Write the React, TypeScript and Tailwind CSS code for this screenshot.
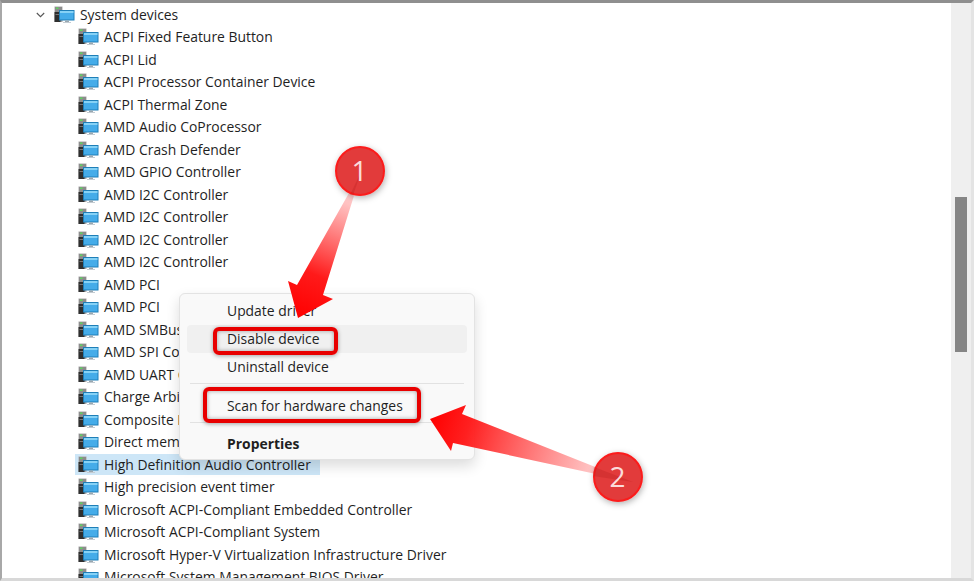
import React from "react";

const devices = [
  "ACPI Fixed Feature Button",
  "ACPI Lid",
  "ACPI Processor Container Device",
  "ACPI Thermal Zone",
  "AMD Audio CoProcessor",
  "AMD Crash Defender",
  "AMD GPIO Controller",
  "AMD I2C Controller",
  "AMD I2C Controller",
  "AMD I2C Controller",
  "AMD I2C Controller",
  "AMD PCI",
  "AMD PCI",
  "AMD SMBus",
  "AMD SPI Controller",
  "AMD UART Controller",
  "Charge Arbitration Driver",
  "Composite Bus Enumerator",
  "Direct memory access controller",
  "High Definition Audio Controller",
  "High precision event timer",
  "Microsoft ACPI-Compliant Embedded Controller",
  "Microsoft ACPI-Compliant System",
  "Microsoft Hyper-V Virtualization Infrastructure Driver",
  "Microsoft System Management BIOS Driver",
];

function DeviceIcon() {
  return (
    <svg width="21" height="18" viewBox="0 0 21 18" className="shrink-0">
      <rect x="0.5" y="0.5" width="8" height="15.5" fill="#a9a9a9" />
      <rect x="1" y="1" width="7" height="5" fill="#8c8c8c" />
      <rect x="2" y="1.5" width="2.5" height="1.5" fill="#5fd35f" />
      <rect x="0.5" y="6" width="6" height="10" fill="#2f2f2f" />
      <rect x="1.5" y="8" width="3.5" height="1" fill="#777" />
      <rect x="5" y="4" width="15.5" height="10.5" fill="#1f7fb8" />
      <rect x="6" y="5" width="13.5" height="8.5" fill="#45ace9" />
      <rect x="6" y="5" width="13.5" height="2" fill="#86d2f6" />
      <rect x="11" y="14.5" width="4" height="1.5" fill="#9aa7b0" />
      <rect x="9" y="16" width="8" height="1" fill="#c4ccd2" />
    </svg>
  );
}

function Row({ label }: { label: string }) {
  const selected = label === "High Definition Audio Controller";
  return (
    <div className="flex h-[22.5px] items-center pl-[73px]">
      <div className={`flex h-[21px] items-center pl-[3px] pr-[9px] ${selected ? "bg-[#cde6f7]" : ""}`}>
        <DeviceIcon />
        <span className="ml-[5px] whitespace-nowrap">{label}</span>
      </div>
    </div>
  );
}

function MenuItem({ label, className = "" }: { label: string; className?: string }) {
  return (
    <div className={`mx-[7px] flex h-[28px] items-center rounded-[4px] pl-[40px] ${className}`}>{label}</div>
  );
}

export default function App() {
  return (
    <div
      className="relative h-[581px] w-[974px] overflow-hidden border-t-[3px] border-b-[3px] border-l-[2px] border-r-[3px] border-t-[#8f8f8f] border-b-[#d8d8d8] border-l-[#a8a8a8] border-r-[#e4e4e4] bg-white text-[13.9px] leading-none text-[#1f1f1f]"
      style={{ fontFamily: '"Open Sans", "Noto Sans", sans-serif' }}
    >
      <div className="flex h-full">
        <div className="min-w-0 flex-1 overflow-hidden pt-[0.5px]">
          <div className="flex h-[22.5px] items-center pl-[34px]">
            <svg width="9" height="6" viewBox="0 0 9 6" className="shrink-0">
              <path d="M0.8 1 L4.5 4.7 L8.2 1" fill="none" stroke="#555" strokeWidth="1.1" />
            </svg>
            <span className="ml-[9px]"><DeviceIcon /></span>
            <span className="ml-[5px] whitespace-nowrap">System devices</span>
          </div>
          {devices.map((d, i) => (
            <Row key={i} label={d} />
          ))}
        </div>
        <div className="flex w-[20px] shrink-0 flex-col bg-[#efefef] pl-[4px] pr-[4px] pt-[194px]">
          <div className="h-[155px] w-[12px] bg-[#858585]" />
        </div>
      </div>

      {/* Context menu */}
      <div className="absolute left-[177px] top-[290px] flex h-[167px] w-[296px] flex-col rounded-[6px] border border-[#e3e3e3] bg-[#f9f9f9] pt-[3px] shadow-[0_6px_14px_rgba(0,0,0,0.14)]">
        <MenuItem label="Update driver" />
        <MenuItem label="Disable device" className="bg-[#f0f0f0]" />
        <MenuItem label="Uninstall device" />
        <div className="mx-[10px] mb-[8px] mt-[2px] h-px bg-[#e2e2e2]" />
        <MenuItem label="Scan for hardware changes" />
        <div className="mx-[10px] mt-[2px] h-px bg-[#e2e2e2]" />
        <MenuItem label="Properties" className="mt-[7px] font-bold" />
      </div>

      {/* Callout rectangles */}
      <div className="absolute left-[211px] top-[324px] h-[28px] w-[125px] rounded-[6px] border-[4px] border-[#e80000] shadow-[0_1px_4px_rgba(0,0,0,0.35),inset_0_0_4px_rgba(0,0,0,0.35)]" />
      <div className="absolute left-[201px] top-[384px] h-[36px] w-[218px] rounded-[6px] border-[4px] border-[#e80000] shadow-[0_1px_4px_rgba(0,0,0,0.35),inset_0_0_4px_rgba(0,0,0,0.35)]" />

      {/* Arrows */}
      <svg className="absolute left-[-2px] top-[-3px]" width="974" height="581" viewBox="0 0 974 581">
        <defs>
          <linearGradient id="a1" gradientUnits="userSpaceOnUse" x1="358" y1="175" x2="298" y2="318">
            <stop offset="0" stopColor="#ff0000" stopOpacity="0.05" />
            <stop offset="0.2" stopColor="#ff3030" stopOpacity="0.3" />
            <stop offset="0.7" stopColor="#ff1a1a" />
            <stop offset="1" stopColor="#ff0000" />
          </linearGradient>
          <linearGradient id="a2" gradientUnits="userSpaceOnUse" x1="618" y1="477" x2="430" y2="419">
            <stop offset="0" stopColor="#ff0000" stopOpacity="0.08" />
            <stop offset="0.2" stopColor="#ff3030" stopOpacity="0.35" />
            <stop offset="0.8" stopColor="#ff2020" />
            <stop offset="1" stopColor="#ff0000" />
          </linearGradient>
          <filter id="cs" x="-30%" y="-30%" width="160%" height="160%">
            <feDropShadow dx="1" dy="2" stdDeviation="3" floodColor="#000" floodOpacity="0.3" />
          </filter>
        </defs>
        <polygon points="362,170 297,285 288,281 298,318 333,299 323,295" fill="url(#a1)" />
        <polygon points="633,482 462,414 466,405 430,419 451,451 453,443" fill="url(#a2)" />
        <g filter="url(#cs)">
          <circle cx="360" cy="171" r="24" fill="#e23a3a" stroke="#fb1c1c" strokeWidth="2" />
          <circle cx="618" cy="477" r="24" fill="#e23a3a" stroke="#fb1c1c" strokeWidth="2" />
        </g>
        <polygon points="362,170 353,195 350,195" fill="#b01818" opacity="0.25" />
        <polygon points="633,482 594,467 593,476" fill="#b01818" opacity="0.25" />
        <text x="359.5" y="181" textAnchor="middle" fontSize="28" fill="#fbdcdc" fontFamily="Open Sans, sans-serif">1</text>
        <text x="617.5" y="487" textAnchor="middle" fontSize="28" fill="#fbdcdc" fontFamily="Open Sans, sans-serif">2</text>
      </svg>
    </div>
  );
}
